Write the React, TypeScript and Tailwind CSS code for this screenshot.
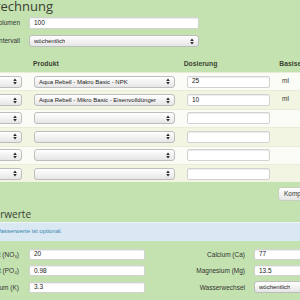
import React from "react";

const Arrows = () => (
  <svg width="4" height="7" viewBox="0 0 4 7" className="shrink-0">
    <path d="M0.2 3 L2 0.6 L3.8 3 Z" fill="#2a2a2a" />
    <path d="M0.2 4 L2 6.4 L3.8 4 Z" fill="#2a2a2a" />
  </svg>
);

function Select({ w, text, cls = "" }: { w: string; text?: string; cls?: string }) {
  return (
    <div
      className={`${w} ${cls} h-[12px] flex items-center justify-between rounded-[3px] border border-[#bdbdbd] bg-gradient-to-b from-white to-[#e6e6e6] pl-[4px] pr-[4px] overflow-hidden`}
    >
      <span className="text-[6px] text-[#222] whitespace-nowrap overflow-hidden leading-none">{text ?? ""}</span>
      <Arrows />
    </div>
  );
}

function Input({ w, text, cls = "" }: { w: string; text?: string; cls?: string }) {
  return (
    <div
      className={`${w} ${cls} flex items-center rounded-[2px] border border-[#d2d2d2] bg-white pl-[4px] shadow-[inset_0_1px_1px_rgba(0,0,0,0.08)]`}
    >
      <span className="text-[6.5px] text-[#222] leading-none">{text ?? ""}</span>
    </div>
  );
}

const rows = [
  { p: "Aqua Rebell - Makro Basic - NPK", d: "25", u: "ml" },
  { p: "Aqua Rebell - Mikro Basic - Eisenvolldünger", d: "10", u: "ml" },
  { p: "", d: "", u: "" },
  { p: "", d: "", u: "" },
  { p: "", d: "", u: "" },
  { p: "", d: "", u: "" },
];

const formRows: [string, string, string, string, boolean][] = [
  ["Nitrat (NO₃)", "20", "Calcium (Ca)", "77", false],
  ["Phosphat (PO₄)", "0.98", "Magnesium (Mg)", "13.5", false],
  ["Kalium (K)", "3.3", "Wasserwechsel", "wöchentlich", true],
];

export default function App() {
  return (
    <div className="w-[300px] h-[300px] overflow-hidden bg-[#c4e2b0] font-['Liberation_Sans',Arial,sans-serif] text-[#333]">
      {/* Title */}
      <div className="h-[17px] flex">
        <div className="w-[53px] shrink-0 flex justify-end">
          <span className="whitespace-nowrap font-['Open_Sans',sans-serif] font-medium text-[13px] leading-[13px] text-[#3a3f36]">
            Düngerberechnung
          </span>
        </div>
      </div>
      {/* Volumen */}
      <div className="flex items-center h-[12px]">
        <div className="w-[20px] flex justify-end shrink-0">
          <span className="whitespace-nowrap text-[6.5px]">Aquariumvolumen</span>
        </div>
        <Input w="w-[170px] h-[12px]" cls="ml-[9px] shrink-0" text="100" />
      </div>
      <div className="flex items-center mt-[6px] h-[12px]">
        <div className="w-[20px] flex justify-end shrink-0">
          <span className="whitespace-nowrap text-[6.5px]">Düngeintervall</span>
        </div>
        <Select w="w-[170px]" cls="ml-[9px] shrink-0" text="wöchentlich" />
      </div>
      {/* Table header */}
      <div className="flex items-end h-[25px] pb-[4px] text-[6.8px] leading-none font-bold text-[#3b4530]">
        <span className="ml-[33px]">Produkt</span>
        <span className="ml-[125px]">Dosierung</span>
        <span className="ml-[62px] whitespace-nowrap">Basiseinheit</span>
      </div>
      {/* Table rows */}
      <div className="flex flex-col">
        {rows.map((r, i) => (
          <div
            key={i}
            className={`h-[18.4px] flex items-center border-t border-[#e8ecd8] ${i % 2 === 0 ? "bg-[#fbfcf6]" : "bg-[#f2f5e1]"}`}
          >
            <Select w="w-[60px]" cls="ml-[-38px] shrink-0" text="" />
            <Select w="w-[141px]" cls="ml-[12px] shrink-0" text={r.p} />
            <Input w="w-[83px] h-[12px]" cls="ml-[12px] shrink-0" text={r.d} />
            <span className="ml-[12px] text-[6.5px] text-[#333] mt-[-2px]">{r.u}</span>
          </div>
        ))}
      </div>
      {/* Button */}
      <div className="flex mt-[4.6px] h-[14px]">
        <div className="ml-[278px] w-[60px] h-[14px] shrink-0 rounded-[3px] border border-[#c5cfbc] bg-gradient-to-b from-white to-[#e6e6e6] flex items-center pl-[5px]">
          <span className="text-[6.5px] text-[#333] whitespace-nowrap">Komponenten</span>
        </div>
      </div>
      {/* Wasserwerte heading */}
      <div className="h-[21px] flex items-end pb-[2px]">
        <div className="w-[31px] flex justify-end shrink-0">
          <span className="whitespace-nowrap font-['Open_Sans',sans-serif] font-medium text-[10px] leading-[12px] text-[#3a3f36]">
            Wasserwerte
          </span>
        </div>
      </div>
      {/* Info */}
      <div className="h-[19px] border-t border-[#eef4f8] bg-[#d9e8f2] flex items-center">
        <div className="w-[62px] flex justify-end shrink-0">
          <span className="whitespace-nowrap text-[6px] text-[#3a87ad]">Die Angabe der Wasserwerte ist optional.</span>
        </div>
      </div>
      {/* Form rows */}
      <div className="flex flex-col gap-[5.5px] mt-[8px]">
        {formRows.map(([l, v, rl, rv, sel], i) => (
          <div key={i} className="flex items-center h-[11px]">
            <div className="w-[19px] flex justify-end shrink-0">
              <span className="whitespace-nowrap text-[6.5px]">{l}</span>
            </div>
            <Input w="w-[116px] h-[11px]" cls="ml-[10px] shrink-0" text={v} />
            <div className="w-[100px] flex justify-end shrink-0">
              <span className="whitespace-nowrap text-[6.5px]">{rl}</span>
            </div>
            {sel ? (
              <Select w="w-[80px]" cls="ml-[9px] shrink-0" text={rv} />
            ) : (
              <Input w="w-[80px] h-[11px]" cls="ml-[9px] shrink-0" text={rv} />
            )}
          </div>
        ))}
      </div>
    </div>
  );
}
